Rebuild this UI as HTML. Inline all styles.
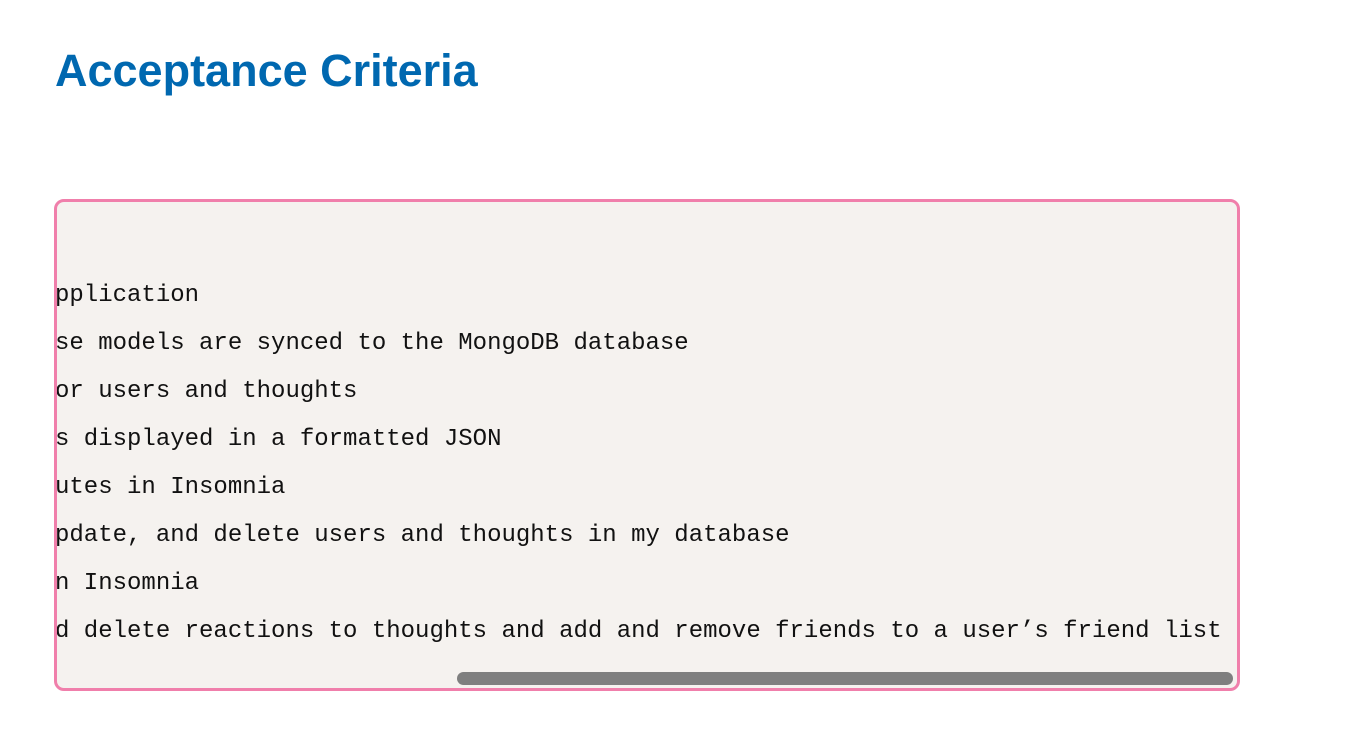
<!DOCTYPE html>
<html><head><meta charset="utf-8"><style>
html,body{margin:0;padding:0;background:#fff;width:1348px;height:732px;overflow:hidden}
h1{position:absolute;left:55px;top:45px;margin:0;font-family:"Liberation Sans",sans-serif;font-weight:bold;font-size:45px;color:#0068b0}
.box{position:absolute;left:54px;top:199px;width:1180px;height:486px;border:3px solid #f07fab;border-radius:10px;background:#f5f2ef;overflow:hidden}
.txt{position:absolute;left:-2px;top:70px;font-family:"Liberation Mono",monospace;font-size:24px;line-height:48px;color:#111;white-space:pre}
.sb{position:absolute;left:400px;top:470px;width:776px;height:13px;border-radius:7px;background:#7f7f7f}
</style></head><body>
<h1>Acceptance Criteria</h1>
<div class="box"><div class="txt">pplication
se models are synced to the MongoDB database
or users and thoughts
s displayed in a formatted JSON
utes in Insomnia
pdate, and delete users and thoughts in my database
n Insomnia
d delete reactions to thoughts and add and remove friends to a user’s friend list</div><div class="sb"></div></div>
</body></html>
